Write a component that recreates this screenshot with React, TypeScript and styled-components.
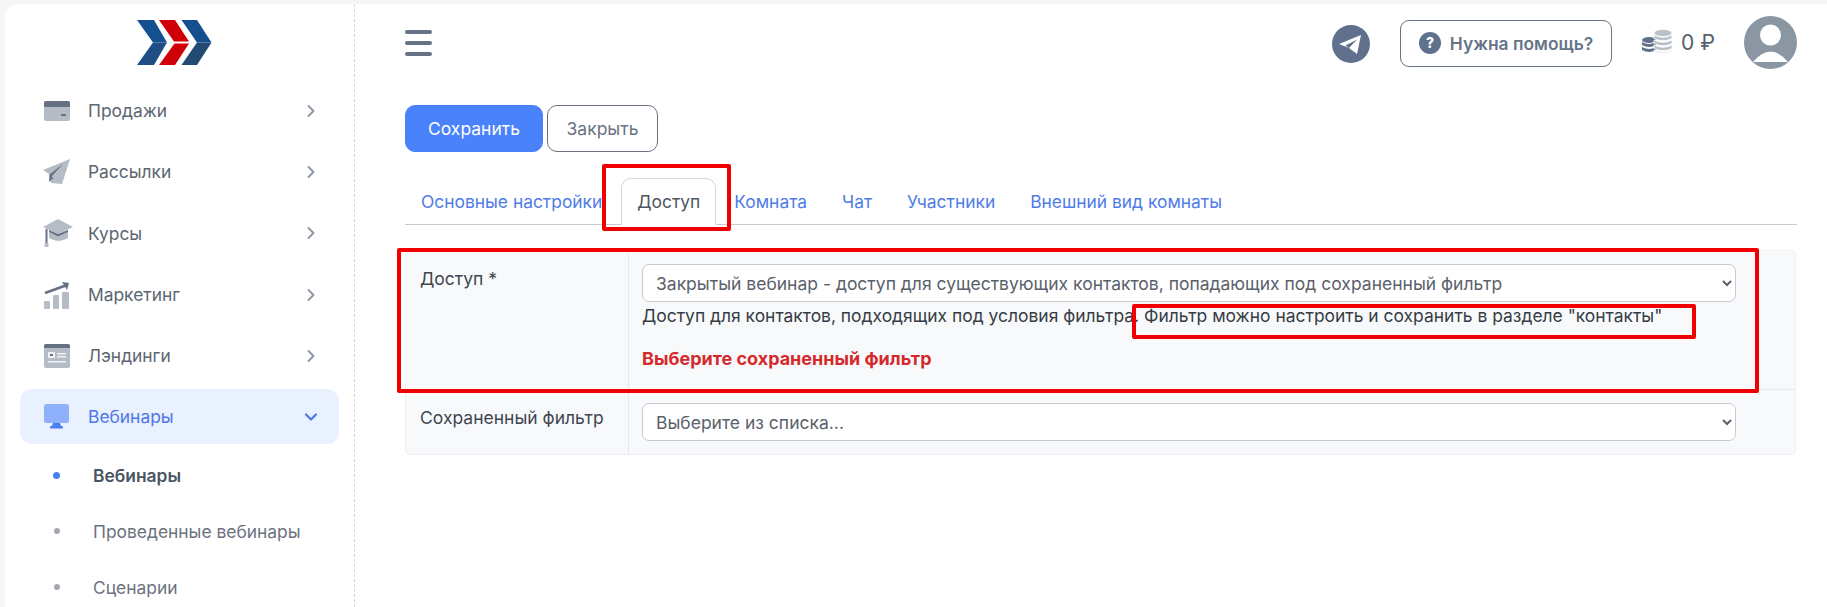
import React from "react";
import styled, { createGlobalStyle } from "styled-components";
import { ChevronRight, ChevronDown } from "lucide-react";

const Global = createGlobalStyle`
  html, body { margin: 0; padding: 0; height: 100%; overflow: hidden; background: #f5f6f7; }
  body { font-family: Inter, "Noto Sans", sans-serif; }
  * { box-sizing: border-box; }
`;

const Page = styled.div`
  position: relative;
  width: 1827px;
  height: 607px;
  padding-top: 4px;
  display: flex;
  overflow: hidden;
`;

const Sidebar = styled.aside`
  width: 350px;
  margin-left: 5px;
  background: #fff;
  border-top-left-radius: 14px;
  border-right: 1px dashed #d5d9de;
  display: flex;
  flex-direction: column;
  flex-shrink: 0;
`;

const LogoWrap = styled.div`
  flex: none;
  height: 73px;
  padding: 16px 0 0 132px;
  svg { display: block; }
`;

const Menu = styled.nav`
  flex: none;
  padding: 3px 15px 0;
  display: flex;
  flex-direction: column;
`;

const MenuItem = styled.div<{ $active?: boolean }>`
  flex: none;
  height: ${(p) => (p.$active ? 55 : 61.3)}px;
  margin: ${(p) => (p.$active ? "3px 0" : 0)};
  padding: 0 18px 0 23px;
  display: flex;
  align-items: center;
  border-radius: 12px;
  background: ${(p) => (p.$active ? "#e9f0fe" : "transparent")};
  color: ${(p) => (p.$active ? "#4d78e6" : "#5c6672")};
  font-size: 17.4px;
`;

const MenuIcon = styled.span`
  width: 45px;
  height: 30px;
  display: flex;
  align-items: center;
  flex-shrink: 0;
`;

const MenuLabel = styled.span`
  flex: 1;
`;

const Arrow = styled.span<{ $active?: boolean }>`
  display: flex;
  color: ${(p) => (p.$active ? "#4d78e6" : "#8f99a6")};
`;

const SubItem = styled.div<{ $active?: boolean }>`
  flex: none;
  height: 56px;
  padding-left: 33px;
  display: flex;
  align-items: center;
  font-size: 17.4px;
  font-weight: ${(p) => (p.$active ? 600 : 400)};
  color: ${(p) => (p.$active ? "#4b5563" : "#6b7280")};
  &::before {
    content: "";
    width: ${(p) => (p.$active ? 7 : 6)}px;
    height: ${(p) => (p.$active ? 7 : 6)}px;
    border-radius: 50%;
    background: ${(p) => (p.$active ? "#4a7ff0" : "#a4a9b0")};
    margin-right: ${(p) => (p.$active ? 33 : 33.5)}px;
    margin-left: ${(p) => (p.$active ? 0 : 0.5)}px;
    flex-shrink: 0;
  }
`;

const Main = styled.main`
  flex: 1;
  background: #fff;
  padding: 0 30px 0 50px;
  min-width: 0;
`;

const Header = styled.header`
  height: 101px;
  display: flex;
  align-items: flex-start;
  justify-content: space-between;
  padding-top: 12px;
`;

const Burger = styled.div`
  margin-top: 14px;
  width: 27px;
  display: flex;
  flex-direction: column;
  gap: 7px;
  span {
    height: 4px;
    border-radius: 2px;
    background: #667283;
  }
`;

const HeaderRight = styled.div`
  display: flex;
  align-items: center;
  height: 53px;
`;

const TelegramBadge = styled.span`
  display: flex;
  margin-right: 30px;
  margin-top: 3px;
`;

const HelpButton = styled.button`
  width: 212px;
  height: 47px;
  margin-top: 1px;
  border: 1px solid #677486;
  border-radius: 9px;
  background: #fff;
  display: flex;
  align-items: center;
  justify-content: center;
  gap: 9px;
  font: 600 17.4px Inter, sans-serif;
  color: #667488;
  white-space: nowrap;
`;

const Balance = styled.div`
  display: flex;
  align-items: center;
  gap: 8px;
  margin-left: 30px;
  width: 102px;
  font-size: 21px;
  color: #56606e;
`;

const Avatar = styled.span`
  display: flex;
`;

const Actions = styled.div`
  display: flex;
  gap: 4px;
`;

const PrimaryButton = styled.button`
  width: 138px;
  height: 47px;
  background: #4a82fb;
  border: 1px solid #4a82fb;
  border-radius: 10px;
  color: #fff;
  font: 400 17.5px Inter, sans-serif;
`;

const SecondaryButton = styled.button`
  width: 111px;
  height: 47px;
  background: #fff;
  border: 1px solid #69737f;
  border-radius: 10px;
  color: #69737f;
  font: 400 17.5px Inter, sans-serif;
`;

const Tabs = styled.div`
  margin-top: 26px;
  height: 47px;
  border-bottom: 1px solid #c6cbd1;
  display: flex;
  align-items: flex-end;
  padding-left: 16px;
`;

const Tab = styled.div<{ $active?: boolean; $gap: number }>`
  height: ${(p) => (p.$active ? 47 : 46)}px;
  margin-right: ${(p) => p.$gap}px;
  margin-bottom: ${(p) => (p.$active ? -1 : 0)}px;
  padding: ${(p) => (p.$active ? "0 15px" : 0)};
  display: flex;
  align-items: center;
  font-size: 17.4px;
  white-space: nowrap;
  color: ${(p) => (p.$active ? "#505660" : "#4f7ce6")};
  background: #fff;
  ${(p) => p.$active && "border: 1px solid #d3d7dc; border-bottom-color: #fff; border-radius: 10px 10px 0 0;"}
`;

const Panel = styled.section`
  margin-top: 25px;
  width: 1391px;
  background: #f8f9fb;
  border: 1px solid #edeff2;
  border-radius: 5px;
`;

const Row = styled.div<{ $last?: boolean }>`
  display: flex;
  ${(p) => !p.$last && "border-bottom: 1px solid #e6e8ec;"}
`;

const LabelCell = styled.div`
  width: 223px;
  padding: 16px 14px 0;
  border-right: 1px solid #e6e8ec;
  font-size: 17.5px;
  line-height: 24px;
  color: #3f4650;
  flex-shrink: 0;
`;

const FieldCell = styled.div<{ $tall?: boolean }>`
  flex: 1;
  padding: 13px 0 ${(p) => (p.$tall ? 15 : 13)}px 13px;
  height: ${(p) => (p.$tall ? 138 : 64)}px;
`;

const Select = styled.select`
  display: block;
  width: 1094px;
  height: 38px;
  padding: 0 9px;
  border: 1px solid #c6cbd2;
  border-radius: 7px;
  background: #fff;
  color: #5a616b;
  font: 400 17.5px Inter, sans-serif;
`;

const Hint = styled.div`
  margin-top: 2px;
  font-size: 17.45px;
  line-height: 24px;
  color: #363c45;
  white-space: nowrap;
`;

const ErrorText = styled.div`
  margin-top: 19px;
  font-size: 18px;
  font-weight: 700;
  line-height: 24px;
  color: #d42a2e;
`;

const Mark = styled.div<{ $x: number; $y: number; $w: number; $h: number }>`
  position: absolute;
  left: ${(p) => p.$x}px;
  top: ${(p) => p.$y}px;
  width: ${(p) => p.$w}px;
  height: ${(p) => p.$h}px;
  border: 4px solid #f00000;
  border-radius: 2px;
  pointer-events: none;
`;

const Logo = () => (
  <svg width="76" height="46" viewBox="0 0 76 46">
    <polygon points="0,0 17,0 30,22.5 16,22.5" fill="#14508f" />
    <polygon points="16,22.5 30,22.5 17,45 0,45" fill="#1f4e86" />
    <polygon points="22,0 38,0 52,21.5 37,21.5" fill="#d00008" />
    <polygon points="37.5,23.5 52,23.5 38,45 22,45" fill="#d00008" />
    <polygon points="44.5,0 60,0 74.5,22.5 60,22.5" fill="#14508f" />
    <polygon points="60,22.5 74.5,22.5 60,45 44.5,45" fill="#234a73" />
  </svg>
);

const CardIcon = () => (
  <svg width="28" height="22" viewBox="0 0 28 22">
    <rect x="1" y="1" width="26" height="20" rx="2" fill="#b5bcc5" />
    <path d="M1 3a2 2 0 0 1 2-2h22a2 2 0 0 1 2 2v4H1z" fill="#667283" />
    <rect x="18" y="14" width="5" height="2" fill="#667283" />
  </svg>
);

const PlaneIcon = () => (
  <svg width="28" height="28" viewBox="0 0 28 28">
    <path d="M27 1 L0 12 L6 16 L8 25 L19 26 Z" fill="#b5bcc5" />
    <path d="M20 6 L6.5 16.5 L6 24 L10.5 20 L8.5 18.5 Z" fill="#667283" />
  </svg>
);

const CapIcon = () => (
  <svg width="31" height="28" viewBox="0 0 31 28">
    <path d="M15 0 L30 8 L15 15 L0 8 Z" fill="#b5bcc5" />
    <path d="M6 13 L15 17.5 L25 13 V19 Q15 25 6 19 Z" fill="#b5bcc5" />
    <path d="M15 15 L25 11 V13 L15 17.5 L6 13 V11 Z" fill="#667283" />
    <rect x="2.5" y="10" width="2" height="16" fill="#667283" />
    <circle cx="3.5" cy="26" r="2.2" fill="#b5bcc5" />
  </svg>
);

const ChartIcon = () => (
  <svg width="28" height="28" viewBox="0 0 28 28">
    <path d="M2 12 L24 4" stroke="#667283" strokeWidth="2.5" fill="none" />
    <path d="M19 1 L26 2 L24 9 Z" fill="#667283" />
    <rect x="1" y="20" width="6" height="8" rx="1" fill="#b5bcc5" />
    <rect x="10" y="14" width="6" height="14" rx="1" fill="#b5bcc5" />
    <rect x="19" y="11" width="7" height="17" rx="1" fill="#b5bcc5" />
  </svg>
);

const PageIcon = () => (
  <svg width="28" height="26" viewBox="0 0 28 26">
    <rect x="1" y="1" width="26" height="24" rx="2" fill="#b5bcc5" />
    <path d="M1 3a2 2 0 0 1 2-2h22a2 2 0 0 1 2 2v2H1z" fill="#667283" />
    <rect x="5" y="9" width="7" height="6" fill="#eef0f2" />
    <rect x="7" y="11" width="3" height="2" fill="#667283" />
    <rect x="14" y="10" width="9" height="1.5" fill="#eef0f2" />
    <rect x="14" y="13" width="9" height="1.5" fill="#eef0f2" />
    <rect x="5" y="18" width="18" height="1.5" fill="#eef0f2" />
  </svg>
);

const MonitorIcon = () => (
  <svg width="27" height="25" viewBox="0 0 27 25">
    <rect x="1" y="0" width="25" height="19" rx="2.5" fill="#8fb0fb" />
    <path d="M10 19 H17 L18 22 H9 Z" fill="#4a7ff0" />
    <rect x="7" y="22" width="13" height="2.5" rx="1" fill="#4a7ff0" />
  </svg>
);

const TelegramIcon = () => (
  <svg width="38" height="38" viewBox="0 0 38 38">
    <circle cx="19" cy="19" r="19" fill="#5f718c" />
    <path d="M7 19 L29 10 L25 29 L17 23 Z M13.5 20.5 L17 23 L25 14.5 Z" fill="#fff" fillRule="evenodd" />
  </svg>
);

const QuestionIcon = () => (
  <svg width="22" height="22" viewBox="0 0 22 22">
    <circle cx="11" cy="11" r="11" fill="#5f718c" />
    <text x="11" y="16" textAnchor="middle" fontSize="14" fontWeight="800" fontFamily="Inter, sans-serif" fill="#fff">?</text>
  </svg>
);

const CoinsIcon = () => (
  <svg width="31" height="27" viewBox="0 0 31 27">
    <g fill="#5f718c">
      <ellipse cx="7" cy="11" rx="7" ry="3" />
      <path d="M0 13 q7 4 14 0 v3 q-7 4 -14 0z" />
      <path d="M0 18 q7 4 14 0 v3 q-7 4 -14 0z" />
    </g>
    <g fill="#b9c0c8" stroke="#fff" strokeWidth="0.8">
      <ellipse cx="21" cy="4" rx="9" ry="3.6" />
      <path d="M12 6 q9 4.5 18 0 v3.5 q-9 4.5 -18 0z" />
      <path d="M12 11 q9 4.5 18 0 v3.5 q-9 4.5 -18 0z" />
      <path d="M12 16 q9 4.5 18 0 v3.5 q-9 4.5 -18 0z" />
      <path d="M12 21 q9 4.5 18 0 v1 q-9 4.5 -18 0z" />
    </g>
  </svg>
);

const AvatarIcon = () => (
  <svg width="53" height="53" viewBox="0 0 53 53">
    <circle cx="26.5" cy="26.5" r="26.5" fill="#8a97a3" />
    <circle cx="26.5" cy="19" r="10.5" fill="#fff" />
    <path d="M9 46 Q26.5 25 44 46 Z" fill="#fff" />
  </svg>
);

const items = [
  { label: "Продажи", icon: <CardIcon /> },
  { label: "Рассылки", icon: <PlaneIcon /> },
  { label: "Курсы", icon: <CapIcon /> },
  { label: "Маркетинг", icon: <ChartIcon /> },
  { label: "Лэндинги", icon: <PageIcon /> },
];

const tabs = [
  { label: "Основные настройки", gap: 19 },
  { label: "Доступ", gap: 18, active: true },
  { label: "Комната", gap: 35 },
  { label: "Чат", gap: 35 },
  { label: "Участники", gap: 35 },
  { label: "Внешний вид комнаты", gap: 0 },
];

export default function App() {
  return (
    <Page>
      <Global />
      <Sidebar>
        <LogoWrap>
          <Logo />
        </LogoWrap>
        <Menu>
          {items.map((it) => (
            <MenuItem key={it.label}>
              <MenuIcon>{it.icon}</MenuIcon>
              <MenuLabel>{it.label}</MenuLabel>
              <Arrow>
                <ChevronRight size={20} strokeWidth={2.4} />
              </Arrow>
            </MenuItem>
          ))}
          <MenuItem $active>
            <MenuIcon>
              <MonitorIcon />
            </MenuIcon>
            <MenuLabel>Вебинары</MenuLabel>
            <Arrow $active>
              <ChevronDown size={20} strokeWidth={2.6} />
            </Arrow>
          </MenuItem>
          <SubItem $active>Вебинары</SubItem>
          <SubItem>Проведенные вебинары</SubItem>
          <SubItem>Сценарии</SubItem>
        </Menu>
      </Sidebar>
      <Main>
        <Header>
          <Burger>
            <span />
            <span />
            <span />
          </Burger>
          <HeaderRight>
            <TelegramBadge>
              <TelegramIcon />
            </TelegramBadge>
            <HelpButton>
              <QuestionIcon />
              Нужна помощь?
            </HelpButton>
            <Balance>
              <CoinsIcon />
              <span>0 ₽</span>
            </Balance>
            <Avatar>
              <AvatarIcon />
            </Avatar>
          </HeaderRight>
        </Header>
        <Actions>
          <PrimaryButton>Сохранить</PrimaryButton>
          <SecondaryButton>Закрыть</SecondaryButton>
        </Actions>
        <Tabs>
          {tabs.map((t) => (
            <Tab key={t.label} $active={t.active} $gap={t.gap}>
              {t.label}
            </Tab>
          ))}
        </Tabs>
        <Panel>
          <Row>
            <LabelCell>Доступ *</LabelCell>
            <FieldCell $tall>
              <Select defaultValue="closed">
                <option value="closed">Закрытый вебинар - доступ для существующих контактов, попадающих под сохраненный фильтр</option>
              </Select>
              <Hint>Доступ для контактов, подходящих под условия фильтра. Фильтр можно настроить и сохранить в разделе "контакты"</Hint>
              <ErrorText>Выберите сохраненный фильтр</ErrorText>
            </FieldCell>
          </Row>
          <Row $last>
            <LabelCell>Сохраненный фильтр</LabelCell>
            <FieldCell>
              <Select defaultValue="">
                <option value="">Выберите из списка...</option>
              </Select>
            </FieldCell>
          </Row>
        </Panel>
      </Main>
      <Mark $x={602} $y={164} $w={129} $h={67} />
      <Mark $x={397} $y={248} $w={1362} $h={145} />
      <Mark $x={1132} $y={304} $w={564} $h={35} />
    </Page>
  );
}
